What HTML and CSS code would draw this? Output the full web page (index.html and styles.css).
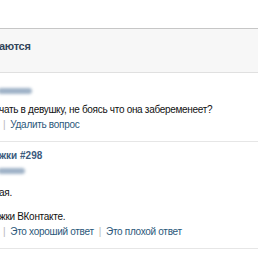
FILE: index.html
```html
<!DOCTYPE html>
<html lang="ru">
<head>
  <meta charset="UTF-8" />
  <title>Вопросы</title>
  <link rel="stylesheet" href="styles.css">
</head>
<body>
  <div id="page">
    <!-- заголовок раздела -->
    <div class="bar">
      <h2>аются</h2>
    </div>

    <!-- вопрос -->
    <div class="post question">
      <div class="author" style="width:34px;"></div>
      <p class="text">чать в девушку, не боясь что она забеременеет?</p>
      <div class="links">
        <span class="sep">|</span><a href="#">Удалить вопрос</a>
      </div>
    </div>

    <!-- ответ -->
    <div class="post answer">
      <div class="title">жки #298</div>
      <div class="author" style="width:27px;"></div>
      <p class="text">ая.</p>
      <p class="text sign">жки ВКонтакте.</p>
      <div class="links">
        <span class="sep">|</span><a href="#">Это хороший ответ</a><span class="sep">|</span><a href="#">Это плохой ответ</a>
      </div>
    </div>
  </div>
</body>
</html>
```

FILE: styles.css
```css
html, body {
  margin: 0;
  padding: 0;
  background: #fff;
  overflow: hidden;
}
body {
  font-family: "Liberation Sans", Tahoma, sans-serif;
  font-size: 10px;
  line-height: 13px;
  letter-spacing: -0.3px;
  color: #111;
}
#page {
  width: 258px;
  padding-top: 28px;
}
.bar {
  background: #f7f7f7;
  border-top: 1px solid #c6c6c6;
  border-bottom: 1px solid #e0e0e0;
  height: 32px;
  padding-top: 11px;
}
.bar h2 {
  margin: 0 0 0 -1px;
  font-size: 11px;
  line-height: 13px;
  font-weight: bold;
  letter-spacing: -0.3px;
  color: #33465b;
}
.post {
  border-bottom: 1px solid #e6e6e6;
  padding-bottom: 10px;
}
.post .author {
  height: 6px;
  margin-left: -2px;
  background: #9fb2c7;
  filter: blur(1.5px);
  border-radius: 3px;
}
.post .text {
  margin: 0 0 0 -1px;
}
.post .title {
  font-weight: bold;
  letter-spacing: 0;
  color: #3b5b7d;
  margin-left: -1px;
}
.question .author {
  margin-top: 15px;
  margin-bottom: 9px;
}
.answer {
  padding-top: 7px;
}
.answer .author {
  margin-top: 6px;
  margin-bottom: 12px;
}
.answer .sign {
  margin-top: 11px;
}
.links {
  margin-top: 2px;
  color: #2b587a;
}
.links a {
  color: #2b587a;
  text-decoration: none;
}
.links .sep {
  color: #b9b9b9;
  margin: 0 5px 0 3px;
}
.links a + .sep {
  margin-left: 5px;
}
```
